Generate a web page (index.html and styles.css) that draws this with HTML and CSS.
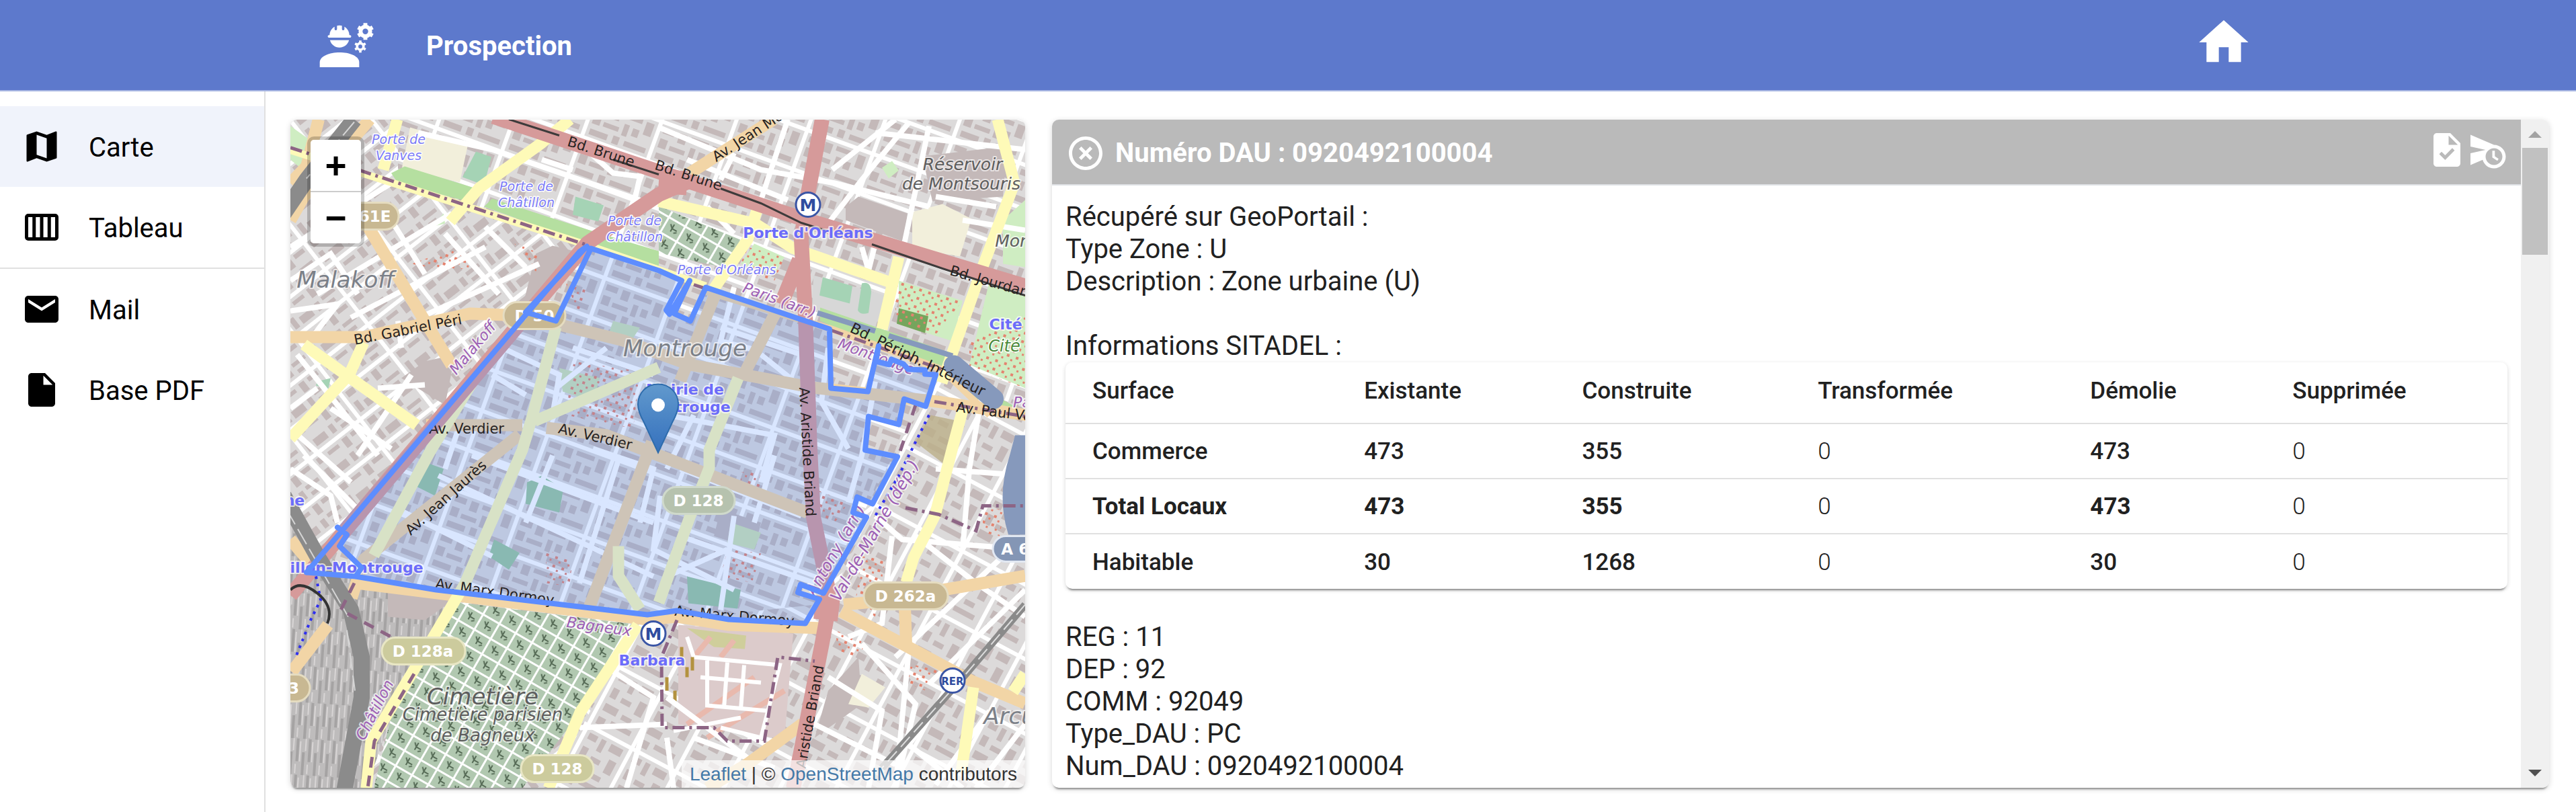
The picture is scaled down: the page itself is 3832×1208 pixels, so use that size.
FILE: index.html
```
<!DOCTYPE html>
<html lang="fr">
<head>
<meta charset="utf-8">
<title>Prospection</title>
<link rel="stylesheet" href="styles.css">
</head>
<body>
<header class="topbar">
  <div class="brand">
    <svg class="icon-lg" viewBox="0 0 24 24" aria-hidden="true"><path d="M1 21v-2c0-2.500 4-4 8-4s8 1.500 8 4v2z"/><path d="M4.740 9H13.260c.270 0 .490-.220 .490-.490V8.490c0-.270-.220-.490-.490-.490H13c0-1.480-.810-2.750-2-3.450V5.500c0 .280-.220 .500-.500 .500S10 5.780 10 5.500V4.140C9.680 4.060 9.350 4 9 4s-.680 .060-1 .140V5.500C8 5.780 7.780 6 7.500 6S7 5.780 7 5.500V4.550C5.810 5.250 5 6.520 5 8h-.260c-.270 0-.490 .220-.490 .490v.030C4.250 8.780 4.470 9 4.740 9z"/><path d="M9 13c1.860 0 3.410-1.280 3.860-3H5.140C5.590 11.720 7.140 13 9 13z"/><g class="gear" transform="translate(19.500 6.500)"><circle r="1.950"/><path d="M0-3.400v1M0 2.400v1M-2.940-1.700l.86.5M2.080 1.200l.86.5M-2.940 1.700l.86-.5M2.080-1.200l.86-.5"/></g><g class="gear gear-sm" transform="translate(17.450 12.600)"><circle r="1.300"/><path d="M0-2.450v.8M0 1.650v.8M-2.120-1.220l.7.400M1.420.820l.7.400M-2.120 1.220l.7-.400M1.420-.820l.7-.400"/></g></svg>
    <h1 class="brand-title">Prospection</h1>
  </div>
  <a class="home" href="#" aria-label="Accueil"><svg class="icon-lg" viewBox="0 0 24 24" aria-hidden="true"><path d="M10 20v-6h4v6h5v-8h3L12 3 2 12h3v8z"/></svg></a>
</header>
<div class="layout">
  <nav class="sidebar">
    <a class="nav-item active" href="#"><svg class="icon" viewBox="0 0 24 24" aria-hidden="true"><path d="M20.500 3l-.16.03L15 5.100 9 3 3.360 4.900c-.21.07-.36.25-.36.48V20.500c0 .28.22.5.5.5l.16-.03L9 18.900l6 2.100 5.640-1.900c.21-.07.36-.25.36-.48V3.500c0-.28-.22-.5-.5-.5zM15 19l-6-2.110V5l6 2.110V19z"/></svg><span>Carte</span></a>
    <a class="nav-item" href="#"><svg class="icon" viewBox="0 0 24 24" aria-hidden="true"><path fill-rule="evenodd" d="M4 4h16a2 2 0 0 1 2 2v12a2 2 0 0 1-2 2H4a2 2 0 0 1-2-2V6a2 2 0 0 1 2-2zM4 6v12h2.500V6zM8.500 6v12H11V6zM13 6v12h2.500V6zM17.500 6v12H20V6z"/></svg><span>Tableau</span></a>
    <a class="nav-item separated" href="#"><svg class="icon" viewBox="0 0 24 24" aria-hidden="true"><path d="M20 4H4c-1.100 0-1.990.9-1.990 2L2 18c0 1.100.9 2 2 2h16c1.100 0 2-.9 2-2V6c0-1.100-.9-2-2-2zm0 4l-8 5-8-5V6l8 5 8-5v2z"/></svg><span>Mail</span></a>
    <a class="nav-item" href="#"><svg class="icon" viewBox="0 0 24 24" aria-hidden="true"><path d="M6 2c-1.100 0-1.990.9-1.990 2L4 20c0 1.100.89 2 1.990 2H18c1.100 0 2-.9 2-2V8l-6-6H6zm7 7V3.500L18.500 9H13z"/></svg><span>Base PDF</span></a>
  </nav>
  <main class="content">
    <section class="map card" aria-label="Carte">
      <svg class="map-canvas" viewBox="0 0 1093 995" preserveAspectRatio="xMidYMid slice">
        <defs>
          <pattern id="blocksA" width="96" height="52" patternUnits="userSpaceOnUse" patternTransform="rotate(-38)"><rect width="96" height="52" fill="#fff"/><rect x="2" y="3" width="90" height="46" fill="#dcdada"/><path fill="#c4b9b9" d="M6 6h14v10H6zM26 8h20v6H26zM54 6h10v16H54zM70 6h18v7H70zM6 26h8v18H6zM20 32h22v12H20zM50 30h8v14h-8zM64 28h24v6H64zM66 40h14v6H66z"/></pattern>
          <pattern id="blocksB" width="104" height="62" patternUnits="userSpaceOnUse" patternTransform="rotate(20)"><rect width="104" height="62" fill="#fff"/><rect x="3" y="3" width="98" height="56" fill="#dcdada"/><path fill="#c4b9b9" d="M7 7h18v9H7zM32 7h12v15H32zM50 7h28v7H50zM84 8h12v20H84zM7 24h12v14H7zM24 30h24v7H24zM54 22h8v18h-8zM68 24h10v12H68zM8 46h28v9H8zM44 44h10v12H44zM62 46h34v8H62z"/></pattern>
          <pattern id="blocksC" width="74" height="98" patternUnits="userSpaceOnUse" patternTransform="rotate(28)"><rect width="74" height="98" fill="#fff"/><rect x="3" y="3" width="68" height="92" fill="#dcdada"/><path fill="#c4b9b9" d="M8 8h14v10H8zM28 8h8v20h-8zM44 8h20v12H44zM8 30h10v16H8zM26 38h16v8H26zM52 30h12v22H52zM8 56h22v12H8zM38 60h16v8H38zM8 78h12v12H8zM28 76h34v8H28z"/></pattern>
          <pattern id="graves" width="28" height="26" patternUnits="userSpaceOnUse" patternTransform="rotate(30)"><rect width="28" height="26" fill="#fff"/><rect x="2" y="2" width="25" height="23" fill="#b1c8b0"/><path stroke="#566b56" stroke-width="2" fill="none" d="M8 8l5 5M13 6v12M13 13h8M18 18l4-3"/></pattern>
          <pattern id="trees" width="14" height="13" patternUnits="userSpaceOnUse" patternTransform="rotate(18)"><path fill="#e4836f" d="M2 2h4v4H2zM9 8h3v3H9z"/></pattern>
          <pattern id="yard" width="18" height="54" patternUnits="userSpaceOnUse" patternTransform="rotate(4)"><rect width="18" height="54" fill="#bebcbc"/><path stroke="#a5a3a3" stroke-width="4" d="M4 0v34M13 20v34"/><path stroke="#d8d5d5" stroke-width="2" d="M8 4v30M16 0v18M2 38v14"/></pattern>
          <linearGradient id="pin" x2="0" y2="1"><stop stop-color="#6199cd"/><stop offset="1" stop-color="#3470bd"/></linearGradient>
        </defs>
        <rect width="1093" height="995" fill="url(#blocksA)"/>
        <path fill="url(#blocksB)" d="M302 0H1093V600L960 390 620 250 440 185 160 90V0z"/>
        <path fill="url(#blocksB)" d="M24 674L441 189 805 312 960 380 766 750 531 737z"/>
        <path fill="url(#blocksC)" d="M800 720L960 380 1093 430V995H384L517 750z"/>
        <path fill="url(#yard)" d="M0 590L100 690 250 705 215 800 150 890 113 995H0z"/>
        <path fill="#dccbcb" d="M577 752L748 765 735 922 577 900z"/>
        <path fill="#cfce9b" d="M590 757L678 768 676 788 630 785z"/>
        <path fill="none" stroke="#e9b9ad" stroke-width="8" d="M600 800L625 770M640 800L660 775M590 900L690 830M620 920L735 850"/>
        <path fill="none" stroke="#fff" stroke-width="6" d="M590 770L600 800 728 812 700 920M620 805V872L710 880M650 808L645 876M675 812L670 878M610 830L700 838M570 910L670 890M640 905L720 925"/>
        <path fill="none" stroke="#b3923f" stroke-width="5" d="M582 785V800M598 800V820M560 830V850M572 850V868M590 815V830"/>
        <path fill="#c4b9b9" d="M200 360L245 350 230 425 165 385zM390 188L430 198 345 280 365 200zM826 130L845 115 918 140 912 182 826 150zM940 55L1066 40 1060 115 955 122zM800 850L845 800 850 870 780 920zM145 700L250 710 200 745 145 740zM640 580L700 600 690 640 630 620z"/>
        <path fill="#d7d7d7" d="M778 232L885 262 870 310 776 285z"/>
        <path fill="#f2efdb" d="M178 12L264 38 252 94 166 72zM925 138L970 126 1013 148 996 204 925 192zM830 870L850 825 885 845 860 875z"/>
        <path fill="#cfedc2" d="M0 60V10L28 30 24 80zM880 72L895 62 905 76 890 88zM690 185L735 205 720 230 670 215zM1040 240L1093 262V400L1010 365zM210 160L228 140 230 155zM905 240L1000 270 985 330 905 305zM1060 150L1093 120V220L1060 215z"/>
        <path fill="#a5d3b5" d="M276 48L299 56 288 98 256 86zM792 235L836 248 832 274 787 262zM850 244q14-4 14 14l-4 30q-12 4-16-4zM424 115L466 128 458 152 420 142zM40 390L60 385 56 402 38 396zM888 760l14 8-3 6-15-7z"/>
        <path fill="#75a55c" d="M905 281L949 293 944 318 902 304z"/>
        <path fill="#bcaf88" d="M952 440L1000 450 975 515 930 480z" opacity=".8"/>
        <path fill="#9cc79f" d="M352 540L374 530 406 550 400 585 350 572zM303 625L341 645 325 670 295 650zM590 680L670 700 665 728 592 720zM200 510L228 520 215 560 185 545z"/>
        <path fill="#cfe3b4" d="M400 370L460 385 450 420 405 405zM655 600L700 615 690 640 650 630zM480 300L520 310 500 340 470 330z"/>
        <path fill="url(#trees)" d="M420 360L520 375 510 460 410 440zM680 190L735 205 720 240 665 225zM900 240L1000 270 960 320 900 300zM1010 330L1093 290V400L1010 370zM780 550L830 570 810 600 785 590zM650 640L700 645 690 690 640 680zM380 640L420 655 415 695 380 690zM850 650L885 655 870 740 840 720zM920 810L965 820 945 850 920 840zM810 760L860 780 840 800 815 790zM1030 580L1062 580 1055 620 1030 615zM180 215L250 190 280 220 230 225zM330 180L370 200 365 230zM408 240L440 250 430 290zM670 525h30v30h-30z"/>
        <path fill="url(#graves)" d="M252 719L517 752 431 882 345 995H124L149 892 188 812z"/>
        <path fill="url(#graves)" d="M548 129L669 179 652 222 548 199z"/>
        <path fill="#b5dfa0" d="M150 80L170 70 283 105 263 122 160 95zM288 130L300 118 445 165 548 196V218L440 184zM788 280L975 345 1055 415 1093 435V448L1040 435 960 372 788 300z"/>

        <g fill="none" stroke="#fff" stroke-width="8">
          <path d="M190 20L300 45 548 130M374 60L420 75M440 45L480 80 520 85 510 130M548 12L700 75 810 95 950 130M590 60L740 120M740 0L700 120M806 75L900 0M920 5L850 90 800 155M870 20L1093 45M950 10L910 200M660 50L640 90M620 130L660 170M850 190L860 225 870 185M960 115L1050 130M1000 150L1093 165"/>
          <path d="M0 190L150 95M40 260L240 140M90 295L290 190M190 296L370 215M150 150L200 230M230 170L310 260M290 160L350 220M0 240L60 200 100 260M0 285L70 275 20 340M160 300L165 340M130 400L200 395M180 380L100 500M10 350L130 500M0 520L60 560 70 600M20 500L100 580M0 430L40 400M0 460L90 540M60 430L150 490"/>
          <path d="M315 340L400 380 390 440M300 380L350 410M420 340L540 380M395 400L470 340M450 490L540 520 520 600M250 460L230 520M220 530L540 680M160 580L300 650M270 500L540 600M390 500L350 600M490 500L430 690M640 310L760 350M620 300L600 350M660 250L640 330 700 345M560 440L720 470 700 540M580 520L760 590M550 560L540 640 660 700M600 440L560 520M660 590L640 730M580 620L780 690M800 340L790 420 830 490M870 390L850 500 830 570M700 350L750 390M720 500L690 600M560 680L650 640"/>
          <path d="M895 620L880 750 830 770M930 620L1020 690 1093 740M870 590L910 625 1093 640M960 520L1093 530M1030 400L1010 520 1000 640M1060 650L900 800M1093 700L950 840M920 790L900 995M850 780L930 870 900 995M780 900L900 960M800 830L880 880 860 995M980 850L920 930 1000 995M1040 880L960 990M1093 900L1020 995M470 815L540 860 500 995M430 905L560 900M560 860L680 950M560 920L570 995M600 920L720 965"/>
        </g>
        <g fill="none" stroke="#f2d5a6" stroke-width="18" stroke-linejoin="round">
          <path d="M42 0L24 70 0 95M118 0L20 115 0 150M109 149L195 292 240 366M0 324H109L267 289 345 292 495 329 594 365 777 399 962 420 1108 442M594 80L719 0M202 455H345M381 459L470 470 548 500 769 585M341 469L109 655 91 712M99 690L531 744 575 740 652 752 790 757M634 255L580 389M723 285L677 375M538 480L445 725M823 722L855 719 977 699 1093 679M819 732L919 785 1012 835 1093 869M914 725L916 782M762 899L680 959 620 995M0 625L34 665M56 752L2 822"/>
          <path stroke-width="10" d="M618 256L805 312 969 372 1040 440"/>
        </g>
        <g fill="none" stroke="#fefab8" stroke-width="17" stroke-linejoin="round">
          <path d="M159 0L138 75M416 0L374 35 281 102 238 152M548 122L691 155 748 192 891 242M694 135L680 179 630 252M905 205L880 312M1052 0L1077 95 1030 219 969 392M1002 425L984 492 959 589 927 652 916 689M1016 845L998 972M1093 825L1075 852M20 335L81 379 188 455M109 332L88 379 0 475M395 309L359 445 345 492 259 692 188 812 120 925 113 995M548 369L363 449M270 392L209 492 124 649M666 385L623 492V519L594 592 548 719M488 635V679L520 729M517 752L431 882 384 995"/>
          <path stroke-width="11" d="M0 46L438 186 618 248"/>
        </g>
        <path fill="none" stroke="#8699bc" stroke-width="30" stroke-linecap="round" d="M987 366L1046 416"/>
        <path fill="none" stroke="#8699bc" stroke-width="8" d="M784 288L870 315M890 322L985 352"/>
        <path fill="#8699bc" d="M1078 470H1093V618H1068Q1050 560 1070 500z"/>
        <g fill="none" stroke="#d69a9a" stroke-width="22" stroke-linejoin="round">
          <path d="M302 -4L548 78 762 148 1093 248M594 92L548 112 442 184 0 708M791 0L769 115 760 179 766 292 773 492 778 592 800 699V730L791 779 759 942 748 995M757 209L730 275"/>
          <path stroke-width="36" d="M548 92L590 95M800 710L796 745"/>
        </g>
        <g fill="none">
          <path stroke="#3e3b3b" stroke-width="3" d="M325 0L400 24M480 60L548 82M640 103L700 125 760 154 798 166M865 186L970 222 1093 262"/>
          <path stroke="#8b8b8b" stroke-width="24" d="M95 0L24 90 -10 140M-10 560L40 650 90 730 106 800V860L80 1000"/>
          <path stroke="#d5d5d5" stroke-width="2" stroke-dasharray="26 8" d="M95 4L24 88M-6 580L86 740M84 760L96 850"/>
          <path stroke="#8a8a8a" stroke-width="11" d="M1093 722L1005 825 880 965"/>
          <path stroke="#ddd" stroke-width="2" stroke-dasharray="20 9" d="M1093 722L1005 825 880 965"/>
          <path stroke="#8d6585" stroke-width="5" stroke-dasharray="18 7 4 7" d="M0 42L438 186M600 246L618 252M805 314L969 372M958 420L1093 442M915 578L965 588 1020 612 1030 575H1093M575 745L552 800 553 905 630 905 650 925 705 925 725 800 780 806"/>
          <path stroke="#8d6585" stroke-width="5" stroke-dasharray="16 12" d="M95 690L75 730 150 770M184 825L125 925 115 995M930 425L905 500"/>
          <path stroke="#2f2ff0" stroke-width="4" stroke-dasharray="4 7" d="M38 680L45 715 30 745 8 800M950 440L905 530 870 590"/>
          <path stroke="#333" stroke-width="4" d="M0 700Q15 685 40 705T55 750"/>
        </g>

        <path class="zone-fill" d="M70 607L350 287 395 300 447 192 548 225 582 240 559 284 564 290 594 240 571 289 595 300 618 250 802 312 804 400 859 405 875 337 871 360 891 365 894 357 912 364 919 372 944 373V379L960 380 945 427 913 416 905 454 860 442 855 492 903 502 866 572 843 562 837 585 857 592 793 705 759 692 755 704 787 714 766 750 652 744 575 731 531 737 217 700 97 680 106 667 73 635 84 618z"/>

        <g class="water-label" font-size="19"><text x="161" y="36">Porte de</text><text x="161" y="60">Vanves</text><text x="351" y="106">Porte de</text><text x="351" y="130">Châtillon</text><text x="512" y="157">Porte de</text><text x="512" y="181">Châtillon</text><text x="649" y="230">Porte d'Orléans</text></g>
        <g class="place-label" font-size="34"><text x="82" y="250">Malakoff</text><text x="587" y="352">Montrouge</text><text x="1090" y="899">Arcueil</text></g>
        <g class="place-label dark" font-size="25"><text x="1000" y="75">Réservoir</text><text x="998" y="104">de Montsouris</text><text x="1086" y="189">Monts</text><text x="286" y="870" font-size="34">Cimetière</text><text x="286" y="894" font-size="26">Cimetière parisien</text><text x="286" y="925" font-size="26">de Bagneux</text></g>
        <g class="station-label" font-size="22"><text x="770" y="176">Porte d'Orléans</text><text x="587" y="409">Mairie de</text><text x="587" y="435">Montrouge</text><text x="538" y="812">Barbara</text><text x="70" y="674">Châtillon-Montrouge</text><text x="1064" y="312">Cité</text><text x="6" y="574">ne</text></g>
        <text class="park-label" font-size="24" x="1062" y="345">Cité</text>
        <g class="road-label" font-size="21"><text transform="translate(460 55) rotate(18)">Bd. Brune</text><text transform="translate(590 90) rotate(18)">Bd. Brune</text><text transform="translate(684 31) rotate(-33)">Av. Jean Mo</text><text transform="translate(1038 248) rotate(16)">Bd. Jourdan</text><text transform="translate(176 320) rotate(-11)">Bd. Gabriel Péri</text><text transform="translate(262 467)">Av. Verdier</text><text transform="translate(452 479) rotate(13)">Av. Verdier</text><text transform="translate(236 568) rotate(-42)">Av. Jean Jaurès</text><text transform="translate(303 710) rotate(8)">Av. Marx Dormoy</text><text transform="translate(660 746) rotate(5)">Av. Marx Dormoy</text><text transform="translate(762 495) rotate(87)">Av. Aristide Briand</text><text transform="translate(780 890) rotate(-80)">Aristide Briand</text><text font-size="22" transform="translate(930 364) rotate(26)">Bd. Périph. Intérieur</text><text transform="translate(1046 442) rotate(7)">Av. Paul Va</text></g>
        <g class="border-label" font-size="22"><text transform="translate(277 345) rotate(-50)">Malakoff</text><text transform="translate(725 276) rotate(20)">Paris (arr.)</text><text transform="translate(869 360) rotate(20)">Montrouge</text><text transform="translate(458 762) rotate(8)">Bagneux</text><text transform="translate(132 882) rotate(-63)">Châtillon</text><text font-size="24" transform="translate(818 645) rotate(-60)">Antony (arr.)</text><text font-size="24" transform="translate(876 616) rotate(-60)">Val-de-Marne (dép.)</text><text x="1093" y="428">Par</text></g>

        <g class="shield"><rect x="50" y="124" width="111" height="40" rx="20"/><rect x="317" y="272" width="92" height="40" rx="20"/><rect x="-31" y="826" width="60" height="40" rx="20"/><rect x="853" y="689" width="125" height="40" rx="20"/><rect class="olive" x="136" y="771" width="124" height="40" rx="20"/><rect class="olive" x="343" y="946" width="108" height="40" rx="20"/><rect class="sage" x="554" y="547" width="107" height="40" rx="20"/><rect class="blue" x="1045" y="620" width="80" height="38" rx="19"/><text x="112" y="152">D 61E</text><text x="363" y="300">D 50</text><text x="5" y="854">3</text><text x="915" y="717">D 262a</text><text x="197" y="799">D 128a</text><text x="397" y="974">D 128</text><text x="607" y="575">D 128</text><text x="1086" y="647">A 6a</text></g>
        <g class="metro"><circle cx="770" cy="127" r="18"/><text x="770" y="136">M</text><circle cx="540" cy="765" r="18"/><text x="540" y="774">M</text><circle cx="985" cy="835" r="18"/><text class="rer" x="985" y="841">RER</text></g>

        <path class="zone-line" d="M24 674L430 197 441 189 350 287 395 300 447 192 548 225 582 240 559 284 564 290 594 240 571 289 595 300 618 250 802 312 804 400 859 405 875 337 871 360 891 365 894 357 912 364 919 372 944 373V379L960 380 945 427 913 416 905 454 860 442 855 492 903 502 866 572 843 562 837 585 857 592 793 705 759 692 755 704 787 714 766 750 652 744 575 731 531 737 217 700 97 680 24 674M97 680L106 667 73 635 84 618 70 607"/>
        <path fill="url(#pin)" stroke="#2e6cac" stroke-width="2" d="M547 394c-17 0-30 13-30 30 0 10 4 18 9 27l21 45 21-45c5-9 9-17 9-27 0-17-13-30-30-30z"/><circle cx="547" cy="425" r="10" fill="#fff"/>
      </svg>
      <div class="zoom-control"><button type="button" aria-label="Zoom avant">+</button><button type="button" aria-label="Zoom arrière">−</button></div>
      <p class="attribution"><a href="#">Leaflet</a> | © <a href="#">OpenStreetMap</a> contributors</p>
    </section>
    <section class="panel card">
      <div class="panel-main">
        <header class="panel-head">
          <button class="icon-button" type="button" aria-label="Fermer"><svg class="icon" viewBox="0 0 24 24"><path d="M14.590 8L12 10.590 9.410 8 8 9.410 10.590 12 8 14.590 9.410 16 12 13.410 14.590 16 16 14.590 13.410 12 16 9.410 14.590 8zM12 2C6.470 2 2 6.470 2 12s4.470 10 10 10 10-4.470 10-10S17.530 2 12 2zm0 18c-4.410 0-8-3.590-8-8s3.590-8 8-8 8 3.590 8 8-3.590 8-8 8z"/></svg></button>
          <h2 class="panel-title">Numéro DAU : 0920492100004</h2>
          <div class="panel-actions">
            <button class="icon-button" type="button" aria-label="Valider"><svg class="icon" viewBox="0 0 24 24"><path d="M14 2H6c-1.100 0-1.990.9-1.990 2L4 20c0 1.100.89 2 1.990 2H18c1.100 0 2-.9 2-2V8l-6-6zm-3.060 16L7.400 14.460l1.410-1.410 2.120 2.120 4.240-4.240 1.410 1.410L10.940 18zM13 9V3.500L18.500 9H13z"/></svg></button>
            <button class="icon-button" type="button" aria-label="Planifier"><svg class="icon" viewBox="0 0 24 24"><path d="M16.500 12.500H15v4l3 2 .75-1.230-2.250-1.520V12.500zM16 9L2 3v7l9 2-9 2v7l7.270-3.110C10.090 20.830 12.790 23 16 23c3.860 0 7-3.140 7-7s-3.140-7-7-7zm0 12c-2.750 0-4.980-2.220-5-4.970v-.070c.02-2.740 2.250-4.970 5-4.970 2.760 0 5 2.240 5 5s-2.240 5-5 5z"/></svg></button>
          </div>
        </header>
        <div class="panel-body">
          <p>Récupéré sur GeoPortail :<br>Type Zone : U<br>Description : Zone urbaine (U)</p>
          <p class="spaced">Informations SITADEL :</p>
          <div class="table-card">
            <table>
              <thead><tr><th scope="col">Surface</th><th scope="col">Existante</th><th scope="col">Construite</th><th scope="col">Transformée</th><th scope="col">Démolie</th><th scope="col">Supprimée</th></tr></thead>
              <tbody>
                <tr><th scope="row">Commerce</th><td>473</td><td>355</td><td class="zero">0</td><td>473</td><td class="zero">0</td></tr>
                <tr class="total"><th scope="row">Total Locaux</th><td>473</td><td>355</td><td class="zero">0</td><td>473</td><td class="zero">0</td></tr>
                <tr><th scope="row">Habitable</th><td>30</td><td>1268</td><td class="zero">0</td><td>30</td><td class="zero">0</td></tr>
              </tbody>
            </table>
          </div>
          <p class="spaced">REG : 11<br>DEP : 92<br>COMM : 92049<br>Type_DAU : PC<br>Num_DAU : 0920492100004</p>
        </div>
      </div>
      <div class="scrollbar" aria-hidden="true">
        <svg class="arrow up" viewBox="0 0 42 42"><path d="M11 27L21 17l10 10z"/></svg>
        <div class="thumb"></div>
        <svg class="arrow down" viewBox="0 0 42 42"><path d="M11 15L21 25l10-10z"/></svg>
      </div>
    </section>
  </main>
</div>
</body>
</html>
```
FILE: styles.css
```
* { box-sizing: border-box; }
body {
  margin: 0;
  min-height: 100vh;
  display: flex;
  flex-direction: column;
  background: #fff;
  color: #212121;
  font-family: Roboto, "Liberation Sans", sans-serif;
  font-size: 40px;
  line-height: 48px;
}
h1, h2, p { margin: 0; font-size: inherit; }
a { color: inherit; text-decoration: none; }
button { font: inherit; color: inherit; border: 0; padding: 0; background: none; cursor: pointer; }
svg { display: block; fill: currentColor; }
.icon { width: 60px; height: 60px; }
.icon-lg { width: 88px; height: 88px; }

.topbar {
  display: flex;
  justify-content: space-between;
  align-items: center;
  height: 136px;
  padding: 0 480px 0 472px;
  background: #5d79cc;
  color: #fff;
  border-bottom: 2px solid #a9b7e2;
}
.brand { display: flex; align-items: center; gap: 74px; }
.brand-title { padding-top: 4px; font-weight: 700; }
.gear { fill: none; stroke: currentColor; stroke-width: 1.6; }
.gear-sm { stroke-width: 1; }
.home { padding-bottom: 8px; }

.layout { flex: 1; display: flex; min-height: 0; }
.sidebar { flex: 0 0 395px; padding-top: 22px; border-right: 2px solid #e0e0e0; color: #000; }
.nav-item { display: flex; align-items: center; gap: 40px; height: 120px; padding-left: 32px; }
.nav-item span { padding-top: 4px; }
.nav-item.active { background: #f0f3fb; }
.nav-item.separated { border-top: 2px solid #e0e0e0; height: 122px; }

.content {
  flex: 1;
  min-width: 0;
  display: grid;
  grid-template-columns: 1093fr 2227fr;
  gap: 40px;
  padding: 42px 40px 36px 37px;
}
.card {
  border-radius: 10px;
  overflow: hidden;
  box-shadow: 0 5px 3px -3px rgba(0,0,0,.4), 0 2px 8px rgba(0,0,0,.16);
}

.map { position: relative; background: #ddd; }
.map-canvas { position: absolute; inset: 0; width: 100%; height: 100%; }
.map-canvas text { font-family: "DejaVu Sans", sans-serif; paint-order: stroke; stroke-linejoin: round; }
.zone-fill { fill: #3f80ff; fill-opacity: .2; }
.zone-line { fill: none; stroke: #5d8dff; stroke-width: 8; stroke-linejoin: round; stroke-linecap: round; }
.water-label { fill: #7c7cf6; stroke: #fff; stroke-width: 3; font-style: italic; text-anchor: middle; }
.place-label { fill: #7b8088; stroke: rgba(255,255,255,.6); stroke-width: 4; font-style: italic; text-anchor: middle; }
.dark { fill: #5d5d5d; }
.station-label { fill: #6c6cfa; stroke: rgba(255,255,255,.7); stroke-width: 4; font-weight: 700; text-anchor: middle; }
.park-label { fill: #4b8a3a; stroke: #fff; stroke-width: 3; font-style: italic; text-anchor: middle; }
.road-label { fill: #262222; text-anchor: middle; }
.border-label { fill: #9d5fb5; stroke: rgba(255,255,255,.7); stroke-width: 4; font-style: italic; text-anchor: middle; }
.shield rect { fill: #c8b892; stroke: #e5dcc0; stroke-width: 3; }
.shield .olive { fill: #cccb9d; stroke: #e8e6c4; }
.shield .sage { fill: #b6c2ae; stroke: #cfd9cb; }
.shield .blue { fill: #8496b5; stroke: #e2e8f2; }
.shield text { fill: #fff; font-size: 23px; font-weight: 700; text-anchor: middle; }
.metro circle { fill: #fff; stroke: #3a55a5; stroke-width: 3; }
.metro text { fill: #2f4c9f; font-size: 25px; font-weight: 700; text-anchor: middle; }
.metro .rer { font-size: 15px; }
.zoom-control {
  position: absolute;
  top: 25px;
  left: 25px;
  display: flex;
  flex-direction: column;
  border: 5px solid rgba(0,0,0,.2);
  border-radius: 10px;
  background-clip: padding-box;
}
.zoom-control button {
  width: 75px;
  height: 76px;
  background: #fff;
  color: #000;
  font: 700 55px/76px "Liberation Sans", Arial, sans-serif;
}
.zoom-control button:first-child { height: 78px; border-bottom: 2px solid #ccc; border-radius: 5px 5px 0 0; }
.zoom-control button:last-child { border-radius: 0 0 5px 5px; }
.attribution {
  position: absolute;
  right: 0;
  bottom: 0;
  padding: 0 12px;
  background: rgba(255,255,255,.7);
  color: #333;
  font: 28px/41px "Liberation Sans", Arial, sans-serif;
}
.attribution a { color: #4479a8; }

.panel { display: flex; background: #fff; }
.panel-main { flex: 1; min-width: 0; }
.panel-head {
  display: flex;
  align-items: center;
  height: 98px;
  padding: 4px 20px 0;
  background: #bababa;
  color: #fff;
  border-bottom: 2px solid #dfe2e5;
}
.panel-head .icon-button { flex: none; }
.panel-title { flex: 1; padding-left: 14px; font-weight: 700; }
.panel-actions { display: flex; padding-bottom: 10px; }
.panel-body { padding: 23px 20px 0; }
.spaced { margin-top: 48px; }
.table-card {
  border-radius: 10px;
  overflow: hidden;
  box-shadow: 0 5px 3px -3px rgba(0,0,0,.4), 0 2px 6px rgba(0,0,0,.16);
}
table { width: 100%; border-collapse: collapse; font-size: 35px; line-height: 50px; text-align: left; }
th, td { padding: 2px 40px 0; height: 82px; font-weight: 500; border-top: 2px solid #e0e0e0; }
thead th { height: 91px; border-top: 0; padding-bottom: 6px; }
.total th, .total td { font-weight: 700; }
td.zero, .total td.zero { font-weight: 300; }

.scrollbar { flex: 0 0 42px; display: flex; flex-direction: column; background: #f0f0f0; }
.arrow { width: 42px; height: 42px; }
.up { color: #a3a3a3; }
.down { margin-top: auto; color: #505050; }
.thumb { height: 159px; margin: 0 2px; background: #c1c1c1; }
```
